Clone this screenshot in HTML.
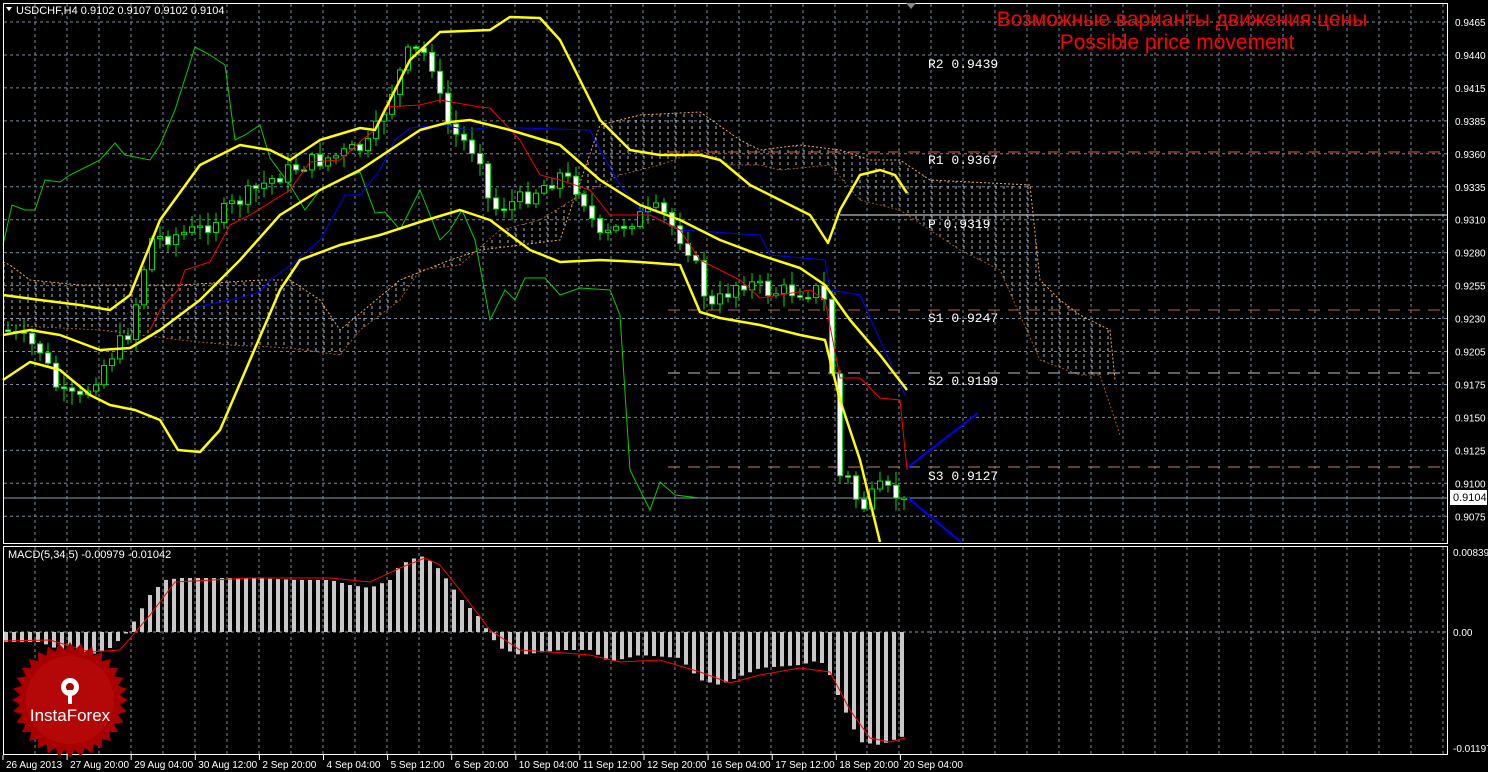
<!DOCTYPE html>
<html><head><meta charset="utf-8"><style>
html,body{margin:0;padding:0;background:#000;width:1488px;height:772px;overflow:hidden}
svg{display:block}
text{font-family:"Liberation Sans",sans-serif}
</style></head><body>
<svg id="s" width="1488" height="772" xmlns="http://www.w3.org/2000/svg">
<defs>
<pattern id="hatch" width="8" height="6" patternUnits="userSpaceOnUse">
<line x1="4" y1="0" x2="4" y2="3" stroke="#e0e0e0" stroke-width="1"/>
</pattern>
</defs>
<rect width="1488" height="772" fill="#000"/>
<g id="grid"></g>
<polygon fill="url(#hatch)" opacity="0.8" points="3,262 10,265 30,280 80,285 130,285 180,285 230,282 260,280 290,280 320,300 340,330 400,280 450,260 480,250 560,240 600,125 640,115 700,112 740,140 760,150 800,145 840,150 870,160 900,160 930,180 1030,185 1040,280 1060,300 1080,315 1110,330 1115,380 1100,375 1080,375 1040,360 1000,270 960,250 900,210 860,200 830,165 780,170 760,165 730,165 700,150 660,165 620,175 580,195 540,220 500,230 460,265 420,270 400,300 360,330 340,355 290,348 230,345 180,340 100,330 3,325"/>
<polyline fill="none" stroke="#f4a460" stroke-width="1" stroke-dasharray="2,2" points="3,262 10,265 30,280 80,285 130,285 180,285 230,282 260,280 290,280 320,300 340,330 400,280 450,260 480,250 560,240 600,125 640,115 700,112 740,140 760,150 800,145 840,150 870,160 900,160 930,180 1030,185 1040,280 1060,300 1080,315 1110,330 1115,380"/>
<polyline fill="none" stroke="#a0522d" stroke-width="1" stroke-dasharray="2,2" points="3,325 100,330 180,340 230,345 290,348 340,355 360,330 400,300 420,270 460,265 500,230 540,220 580,195 620,175 660,165 700,150 730,165 760,165 780,170 830,165 860,200 900,210 960,250 1000,270 1040,360 1080,375 1100,375 1120,435"/>
<g stroke-width="1">
<line x1="668" y1="152" x2="1448" y2="152" stroke="#e0603a" stroke-dasharray="12,8"/>
<line x1="840" y1="215" x2="1448" y2="215" stroke="#e8e8e8"/>
<line x1="668" y1="310" x2="1448" y2="310" stroke="#c06050" stroke-dasharray="12,8"/>
<line x1="668" y1="373" x2="1448" y2="373" stroke="#c0c0c0" stroke-dasharray="12,8"/>
<line x1="668" y1="467" x2="1448" y2="467" stroke="#c08070" stroke-dasharray="12,8"/>
<line x1="3" y1="498" x2="1448" y2="498" stroke="#8a9bb0"/>
</g>
<g font-size="13" fill="#fff">
<text x="928" y="68" style="font-family:'Liberation Mono',monospace">R2  0.9439</text>
<text x="928" y="164" style="font-family:'Liberation Mono',monospace">R1  0.9367</text>
<text x="928" y="228" style="font-family:'Liberation Mono',monospace">P  0.9319</text>
<text x="928" y="322" style="font-family:'Liberation Mono',monospace">S1  0.9247</text>
<text x="928" y="385" style="font-family:'Liberation Mono',monospace">S2  0.9199</text>
<text x="928" y="480" style="font-family:'Liberation Mono',monospace">S3  0.9127</text>
</g>
<polyline fill="none" stroke="#00d000" stroke-width="1" points="3,245 12,205 25,210 35,210 45,180 60,182 70,175 100,160 115,143 125,155 150,160 160,145 175,110 195,47 210,55 225,65 235,140 245,135 260,125 270,158 290,185 305,210 320,190 345,178 360,172 375,213 385,212 400,230 420,190 440,240 450,230 462,210 475,240 490,320 505,290 515,300 525,278 545,278 560,295 580,288 610,290 620,315 630,470 650,510 660,482 675,495 700,498"/>
<g id="candles"></g>
<polyline fill="none" stroke="#0000ff" stroke-width="1" points="180,310 230,300 260,292 270,280 295,262 320,240 345,195 360,195 380,170 395,140 410,128 440,125 470,130 490,127 520,128 590,130 600,150 620,185 640,210 680,230 760,235 770,255 825,260 830,290 860,295 880,340 905,395"/>
<polyline fill="none" stroke="#ff0000" stroke-width="1" points="150,330 160,310 178,290 185,270 210,262 230,225 250,215 290,190 310,162 340,160 362,140 375,130 385,107 420,105 440,100 480,107 490,108 520,140 540,175 560,180 590,190 610,215 650,215 680,230 700,260 740,280 760,298 780,295 810,290 825,300 840,378 860,378 880,398 900,400 907,470"/>
<g fill="none" stroke="#ffff00" stroke-width="2.5" stroke-linejoin="round">
<polyline points="3,295 40,300 80,305 110,310 130,295 160,220 200,165 240,145 270,150 290,160 320,140 360,128 375,130 390,100 410,60 440,32 490,30 510,17 540,18 560,40 580,80 600,120 630,150 660,155 700,155 720,160 750,185 780,200 810,215 828,243 840,210 860,175 880,170 895,175 907,193"/>
<polyline points="3,335 30,330 60,335 100,350 130,348 160,330 200,300 240,260 280,215 320,190 360,170 390,150 420,130 450,122 470,120 510,130 560,145 600,180 640,205 680,220 720,240 760,255 800,268 825,285 850,320 880,355 907,390"/>
<polyline points="3,380 30,362 60,370 90,395 110,405 135,410 160,420 178,450 200,452 220,430 250,360 280,290 300,260 340,245 380,235 420,222 460,210 490,220 530,250 560,262 600,260 640,262 680,265 700,312 720,318 760,325 800,335 825,340 840,400 860,460 880,542"/>
</g>
<line x1="907" y1="468" x2="978" y2="413" stroke="#0000ff" stroke-width="2"/>
<line x1="907" y1="497" x2="962" y2="543" stroke="#0000ff" stroke-width="2"/>
<line x1="3" y1="632" x2="1448" y2="632" stroke="#8a9bb0" stroke-dasharray="3,3"/>
<g id="macd"></g>
<polyline fill="none" stroke="#ff0000" stroke-width="1" points="3,641 50,640 90,652 120,650 150,615 175,582 250,578 330,578 370,582 400,568 425,558 440,565 460,590 490,630 520,650 550,652 590,655 620,662 660,660 700,672 730,683 760,675 800,668 830,672 850,710 870,738 890,742 905,738"/>
<rect x="3.5" y="3.5" width="1444" height="540" fill="none" stroke="#fff"/>
<rect x="3.5" y="546.5" width="1444" height="208" fill="none" stroke="#fff"/>
<polygon points="906,3 916,3 911,9" fill="#888"/>
<polygon points="6,7 12,7 9,11" fill="#fff"/>
<text x="16" y="14" font-size="11" fill="#fff">USDCHF,H4  0.9102 0.9107 0.9102 0.9104</text>
<text x="8" y="558" font-size="11" fill="#fff">MACD(5,34,5) -0.00979 -0.01042</text>
<text x="1182" y="26" font-size="21" fill="#ff0000" text-anchor="middle">Возможные варианты движения цены</text>
<text x="1177" y="49" font-size="21" fill="#ff0000" text-anchor="middle">Possible price movement</text>
<g id="axis" font-size="10" fill="#fff"></g>
<rect x="1450" y="490" width="37" height="15" fill="#fff"/>
<text x="1453" y="501" font-size="11" fill="#000">0.9104</text>
<g transform="translate(70,700)">
<polygon id="star" fill="#a80000"/>
<circle r="44" fill="#c01010" opacity="0.5"/>
<g fill="#fff">
<circle cx="0" cy="-13" r="9"/>
<circle cx="0" cy="-13" r="4" fill="#a80000"/>
<rect x="-2" y="-10" width="4" height="14"/>
</g>
<text x="0" y="21" font-size="17" fill="#fff" text-anchor="middle">InstaForex</text>
</g>
</svg>
<script>
const NS="http://www.w3.org/2000/svg";
function el(p,t,a){const e=document.createElementNS(NS,t);for(const k in a)e.setAttribute(k,a[k]);p.appendChild(e);return e;}
const grid=document.getElementById('grid');
for(let x=35;x<1448;x+=32){el(grid,'line',{x1:x,y1:4,x2:x,y2:543,stroke:'#7a8a9c','stroke-dasharray':'3,3'});el(grid,'line',{x1:x,y1:547,x2:x,y2:754,stroke:'#7a8a9c','stroke-dasharray':'3,3'});}
const axis=document.getElementById('axis');
const pl=["0.9465","0.9440","0.9415","0.9385","0.9360","0.9335","0.9310","0.9280","0.9255","0.9230","0.9205","0.9175","0.9150","0.9125","0.9100","0.9075"];
for(let i=0;i<16;i++){const y=22+i*32.95;el(grid,'line',{x1:4,y1:y,x2:1447,y2:y,stroke:'#7a8a9c','stroke-dasharray':'3,3'});
const t=el(axis,'text',{x:1455,y:y+4});t.textContent=pl[i];}
[["0.00839",556],["0.00",636],["-0.01197",752]].forEach(a=>{const t=el(axis,'text',{x:1453,y:a[1]});t.textContent=a[0];});
const labs=["26 Aug 2013","27 Aug 20:00","29 Aug 04:00","30 Aug 12:00","2 Sep 20:00","4 Sep 04:00","5 Sep 12:00","6 Sep 20:00","10 Sep 04:00","11 Sep 12:00","12 Sep 20:00","16 Sep 04:00","17 Sep 12:00","18 Sep 20:00","20 Sep 04:00"];
labs.forEach((l,i)=>{const x=3+i*64.1;el(axis,'line',{x1:x,y1:755,x2:x,y2:760,stroke:'#fff'});const t=el(axis,'text',{x:x+3,y:768});t.textContent=l;});
function interp(pts,x){for(let i=1;i<pts.length;i++){if(x<=pts[i][0]){const a=pts[i-1],b=pts[i];return a[1]+(b[1]-a[1])*(x-a[0])/(b[0]-a[0]);}}return pts[pts.length-1][1];}
const pp=[[5,330],[40,350],[60,395],[80,400],[100,370],[130,330],[150,240],[200,230],[240,200],[270,180],[300,165],[340,155],[370,145],[390,95],[410,50],[430,55],[440,100],[450,130],[480,155],[490,210],[520,200],[560,175],[580,190],[600,240],[630,220],[660,210],[690,250],[710,310],[740,280],[770,292],[820,290],[830,320],[836,475],[850,480],[860,510],[880,490],[904,498]];
const cg=document.getElementById('candles');
let seed=7;function rnd(){seed=(seed*9301+49297)%233280;return seed/233280;}
let prev=330;
for(let x=8;x<=904;x+=8){let c=interp(pp,x)+(rnd()-0.5)*18;if(x>=896)c=498;const o=prev;const top=Math.min(o,c),bot=Math.max(o,c);
const hi=top-rnd()*12-2,lo=bot+rnd()*12+2;
el(cg,'line',{x1:x,y1:hi,x2:x,y2:lo,stroke:'#00e000'});
const h=Math.max(bot-top,1.5);
el(cg,'rect',{x:x-2.5,y:top,width:5,height:h,fill:c>o?'#fff':'#000',stroke:'#00e000','stroke-width':1});
prev=c;}
const mp=[[5,642],[40,642],[60,650],[90,655],[110,648],[125,635],[135,620],[150,595],[165,580],[180,578],[200,578],[250,578],[300,580],[330,580],[350,585],[370,588],[390,580],[400,565],[415,558],[425,556],[440,570],[460,598],[480,618],[490,635],[500,648],[520,655],[560,650],[590,650],[610,662],[640,655],[680,658],[700,680],[720,685],[760,668],[800,665],[820,660],[830,675],[840,700],[860,742],[880,745],[907,735]];
const mg=document.getElementById('macd');
for(let x=6;x<=906;x+=8){const v=interp(mp,x);el(mg,'rect',{x:x-2,y:Math.min(v,632),width:4,height:Math.abs(v-632),fill:'#c8c8c8'});}
const st=document.getElementById('star');let pts=[];for(let i=0;i<64;i++){const a=i*Math.PI/32;const r=i%2?50:58;pts.push((r*Math.cos(a)).toFixed(1)+','+(r*Math.sin(a)).toFixed(1));}st.setAttribute('points',pts.join(' '));
</script>
</body></html>
